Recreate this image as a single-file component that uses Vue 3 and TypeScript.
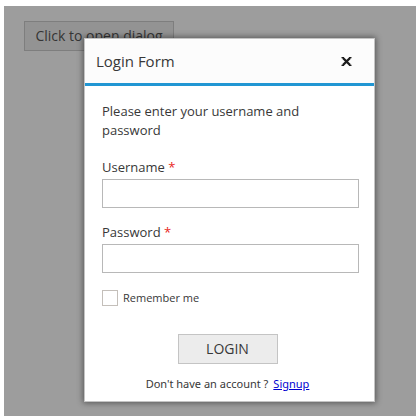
<script setup lang="ts">
import { ref } from 'vue'

interface Field {
  id: string
  label: string
  type: string
}

const fields: Field[] = [
  { id: 'username', label: 'Username', type: 'text' },
  { id: 'password', label: 'Password', type: 'password' },
]

const values = ref<Record<string, string>>({ username: '', password: '' })
const remember = ref(false)
const open = ref(true)
</script>

<template>
  <main class="stage">
    <button class="btn open-btn" type="button" @click="open = true">Click to open dialog</button>
    <div v-if="open" class="overlay"></div>
    <section v-if="open" class="dialog" role="dialog" aria-labelledby="dialog-title">
      <header class="head">
        <h1 id="dialog-title" class="title">Login Form</h1>
        <button class="close" type="button" aria-label="Close" @click="open = false">
          <svg width="11" height="9" viewBox="0 0 11 9" aria-hidden="true">
            <path d="M2 1L9 8M9 1L2 8" fill="none" stroke="#1c1c1c" stroke-width="2.4" />
            <path d="M0.5 0.7H3M8 0.7H10.5M0.5 8.3H3M8 8.3H10.5" fill="none" stroke="#1c1c1c" stroke-width="1.2" />
          </svg>
        </button>
      </header>
      <form class="body" @submit.prevent="open = false">
        <p class="intro">Please enter your username and password</p>
        <div v-for="f in fields" :key="f.id" class="field">
          <label :for="f.id">{{ f.label }} <span class="req">*</span></label>
          <input :id="f.id" v-model="values[f.id]" class="text" :type="f.type" />
        </div>
        <label class="remember">
          <input v-model="remember" class="check" type="checkbox" />
          <span>Remember me</span>
        </label>
        <div class="actions">
          <button class="btn login" type="submit">LOGIN</button>
          <p class="signup">
            <span>Don't have an account ?</span>
            <a href="#signup">Signup</a>
          </p>
        </div>
      </form>
    </section>
  </main>
</template>

<style>
body {
  background: #fff;
}
</style>

<style scoped>
.stage {
  position: relative;
  box-sizing: border-box;
  min-height: calc(100vh - 6px);
  margin: 6px 0 0 4px;
  padding: 15px 20px;
  font-family: "Open Sans", "Noto Sans", sans-serif;
  font-size: 13px;
  line-height: 19px;
  color: #383838;
}
.btn {
  box-sizing: border-box;
  height: 30px;
  padding: 0 0 2px;
  border: 1px solid #c4c4c4;
  background: #ececec;
  font-family: inherit;
  font-size: 14px;
  line-height: 19px;
  color: #383838;
}
.open-btn {
  display: block;
  width: 150px;
}
.overlay {
  position: absolute;
  inset: 0;
  background: rgba(50, 50, 50, 0.48);
}
.dialog {
  position: absolute;
  top: 32px;
  left: 80px;
  right: 41px;
  box-sizing: border-box;
  border: 1px solid #c4c4c4;
  background: #fff;
  box-shadow: 0 0 6px 1px rgba(0, 0, 0, 0.45);
}
.head {
  display: flex;
  align-items: center;
  justify-content: space-between;
  height: 44px;
  padding: 0 20px 0 11px;
  border-bottom: 3px solid #2196d3;
  background: #fcfcfc;
}
.title {
  margin: 0;
  font-size: 15px;
  font-weight: 400;
}
.close {
  display: flex;
  padding: 2px;
  border: 0;
  background: none;
}
.body {
  display: flex;
  flex-direction: column;
  padding: 16px 15px 8px 17px;
}
.intro {
  margin: 0 0 18px;
}
.field {
  display: flex;
  flex-direction: column;
  gap: 2px;
  margin-bottom: 15px;
}
.req {
  color: #e8261c;
}
.text {
  box-sizing: border-box;
  width: 100%;
  height: 29px;
  padding: 0 8px;
  border: 1px solid #b8b8b8;
  border-radius: 0;
  background: #fff;
  font: inherit;
}
.remember {
  display: flex;
  align-items: center;
  gap: 5px;
  margin-top: 2px;
  font-size: 11px;
  line-height: 16px;
}
.check {
  appearance: none;
  box-sizing: border-box;
  width: 16px;
  height: 16px;
  margin: 0;
  border: 1px solid #c4bfba;
  background: #fff;
}
.check:checked {
  background: #2196d3;
}
.actions {
  display: flex;
  flex-direction: column;
  align-items: center;
  gap: 10px;
  margin-top: 28px;
  padding-right: 6px;
}
.login {
  width: 100px;
}
.signup {
  display: flex;
  gap: 5px;
  margin: 0;
  font-family: "Noto Sans", sans-serif;
  font-size: 11px;
}
.signup a {
  color: #0000d0;
}
</style>
